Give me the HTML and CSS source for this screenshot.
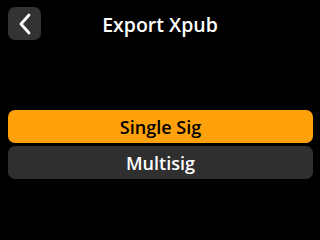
FILE: index.html
```html
<!DOCTYPE html>
<html lang="en">
<head>
<meta charset="UTF-8">
<meta name="viewport" content="width=device-width, initial-scale=1.0">
<link rel="stylesheet" href="styles.css">
</head>
<body>
    <!-- Top bar -->
    <header class="topbar">
        <button class="back-btn" aria-label="Back">
            <svg width="14" height="22" viewBox="0 0 14 22">
                <path d="M11 2 L3 11 L11 20" fill="none" stroke="#fff" stroke-width="2.8" stroke-linecap="round" stroke-linejoin="round"/>
            </svg>
        </button>
        <h1 class="title">Export Xpub</h1>
    </header>

    <!-- Menu -->
    <div class="menu">
        <div class="menu-item selected">Single Sig</div>
        <div class="menu-item">Multisig</div>
    </div>
</body>
</html>
```

FILE: styles.css
```css
body, html {
    margin: 0;
    padding: 0;
    background-color: #000;
    font-family: "Open Sans", "Noto Sans", sans-serif;
    width: 320px;
    height: 240px;
    overflow: hidden;
}

.topbar {
    position: relative;
    height: 48px;
    display: flex;
    align-items: center;
    justify-content: center;
}

.back-btn {
    position: absolute;
    left: 8px;
    top: 7px;
    width: 33px;
    height: 33px;
    border: none;
    border-radius: 7px;
    background-color: #333;
    padding: 0;
    display: flex;
    align-items: center;
    justify-content: center;
}

.title {
    margin: 0;
    font-size: 19.5px;
    font-weight: 600;
    color: #fff;
}

/* Menu */
.menu {
    display: flex;
    flex-direction: column;
    gap: 3px;
    padding: 62px 7px 0 8px;
}

.menu-item {
    height: 33px;
    border-radius: 7px;
    background-color: #2f2f2f;
    color: #fff;
    font-size: 18px;
    font-weight: 600;
    display: flex;
    align-items: center;
    justify-content: center;
}

.menu-item.selected {
    background-color: #ffa10a;
    color: #000;
}
```
